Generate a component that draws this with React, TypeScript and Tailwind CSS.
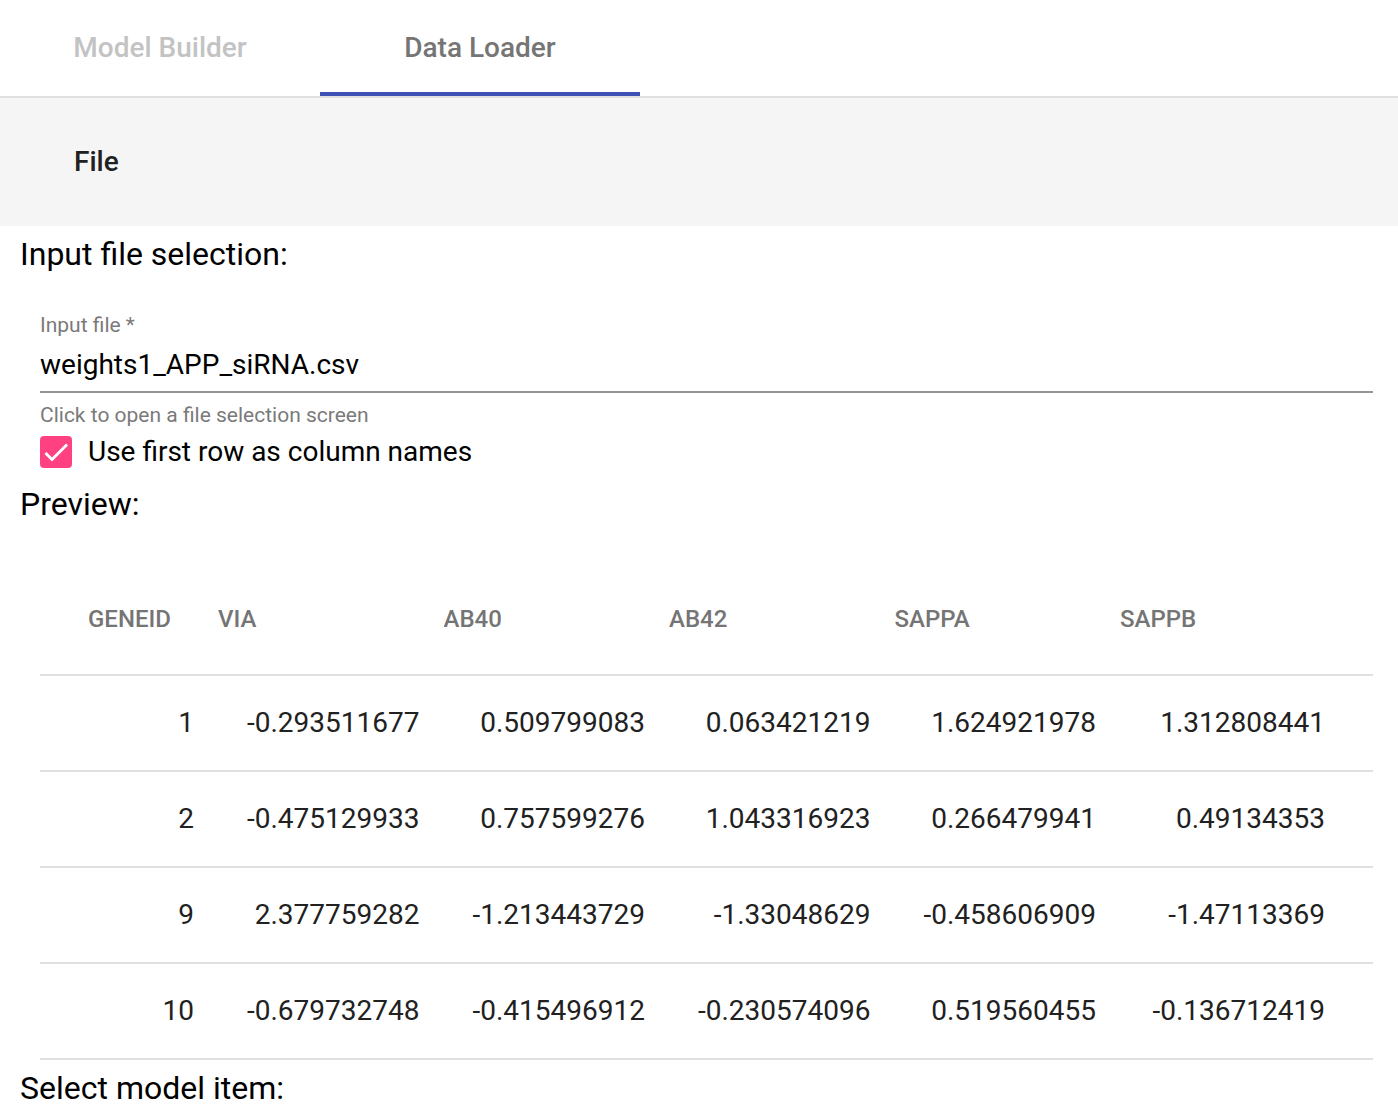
import { useState } from "react";

const columns = ["GENEID", "VIA", "AB40", "AB42", "SAPPA", "SAPPB"];
const rows = [
  ["1", "-0.293511677", "0.509799083", "0.063421219", "1.624921978", "1.312808441"],
  ["2", "-0.475129933", "0.757599276", "1.043316923", "0.266479941", "0.49134353"],
  ["9", "2.377759282", "-1.213443729", "-1.33048629", "-0.458606909", "-1.47113369"],
  ["10", "-0.679732748", "-0.415496912", "-0.230574096", "0.519560455", "-0.136712419"],
];

function Tabs() {
  return (
    <nav className="flex border-b-2 border-[#e0e0e0] text-[28px] font-medium">
      <button className="h-24 w-80 border-b-4 border-transparent pt-1 text-[#c3c3c3]">Model Builder</button>
      <button className="h-24 w-80 border-b-4 border-[#3f51b5] pt-1 text-[#757575]">Data Loader</button>
    </nav>
  );
}

function PreviewTable() {
  return (
    <table className="w-full table-fixed border-collapse text-[28px] text-[#212121]">
      <colgroup>
        <col className="w-[166px]" />
        <col />
        <col />
        <col />
        <col />
        <col className="w-[265px]" />
      </colgroup>
      <thead>
        <tr className="h-28 border-b-2 border-[#e0e0e0] text-2xl text-[#757575]">
          {columns.map((c) => (
            <th key={c} className="p-0 pl-3 text-left font-medium first:pl-12">{c}</th>
          ))}
        </tr>
      </thead>
      <tbody>
        {rows.map((r) => (
          <tr key={r[0]} className="h-24 border-b-2 border-[#e0e0e0]">
            {r.map((v, i) => (
              <td key={i} className="p-0 pr-3 text-right last:pr-12">{v}</td>
            ))}
          </tr>
        ))}
      </tbody>
    </table>
  );
}

export default function App() {
  const [file, setFile] = useState("weights1_APP_siRNA.csv");
  const [header, setHeader] = useState(true);
  return (
    <div className="bg-white font-[Roboto,sans-serif] text-black">
      <Tabs />
      <header className="flex h-32 items-center bg-[#f5f5f5] px-[74px]">
        <button className="text-[28px] font-medium text-[#212121]">File</button>
      </header>
      <main className="pl-5 pr-[25px]">
        <h2 className="pt-2 text-[32px] leading-10">Input file selection:</h2>
        <div className="flex flex-col pl-5 pt-9">
          <label htmlFor="file" className="text-[21px] leading-[30px] text-[#7a7a7a]">Input file *</label>
          <input
            id="file"
            value={file}
            onChange={(e) => setFile(e.target.value)}
            className="h-[53px] border-b-2 border-[#949494] bg-transparent pb-[2px] text-[28px] outline-none"
          />
          <p className="pt-2 text-[21px] leading-7 text-[#7a7a7a]">Click to open a file selection screen</p>
          <label className="flex h-[46px] items-center gap-4 self-start text-[28px]">
            <span className="relative flex size-8">
              <input
                type="checkbox"
                checked={header}
                onChange={(e) => setHeader(e.target.checked)}
                className="peer size-8 appearance-none rounded-sm border-4 border-[#757575] checked:border-[#ff4081] checked:bg-[#ff4081]"
              />
              <svg viewBox="0 0 24 24" className="pointer-events-none invisible absolute inset-0 size-8 peer-checked:visible" fill="none" stroke="white" strokeWidth="2.1">
                <path d="M4.1 12.7 9 17.6 20.3 6.3" />
              </svg>
            </span>
            Use first row as column names
          </label>
        </div>
        <h2 className="pt-[9px] text-[32px] leading-10">Preview:</h2>
        <div className="pl-5 pt-[39px]">
          <PreviewTable />
        </div>
        <h2 className="pt-2 text-[32px] leading-10">Select model item:</h2>
      </main>
    </div>
  );
}
